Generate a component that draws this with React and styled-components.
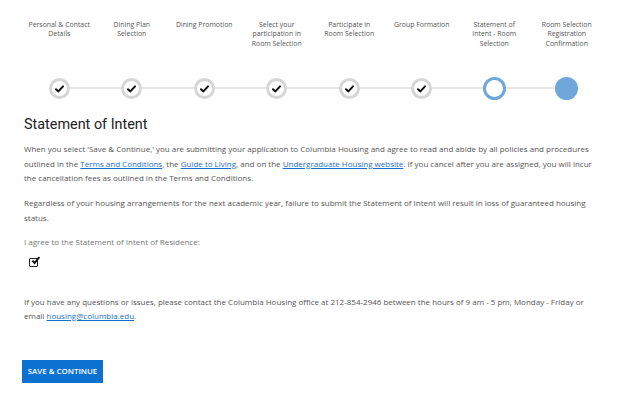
import styled, { createGlobalStyle } from "styled-components";

const GlobalStyle = createGlobalStyle`
  html, body { margin: 0; padding: 0; background: #fff; }
  body { font-family: "Open Sans", "Liberation Sans", sans-serif; }
`;

const steps = [
  { label: "Personal & Contact Details", state: "done" },
  { label: "Dining Plan Selection", state: "done" },
  { label: "Dining Promotion", state: "done" },
  { label: "Select your participation in Room Selection", state: "done" },
  { label: "Participate in Room Selection", state: "done" },
  { label: "Group Formation", state: "done" },
  { label: "Statement of Intent - Room Selection", state: "current" },
  { label: "Room Selection Registration Confirmation", state: "todo" },
];

function Check() {
  return (
    <svg width="9" height="8" viewBox="0 0 9 8">
      <path d="M1 4.2 L3.4 6.4 L8 1.4" fill="none" stroke="#111" strokeWidth="2" strokeLinecap="round" strokeLinejoin="round" />
    </svg>
  );
}

export default function App() {
  return (
    <Page>
      <GlobalStyle />
      <Stepper>
        <Labels>
          {steps.map((s) => (
            <Label key={s.label}>{s.label}</Label>
          ))}
        </Labels>
        <Track>
          <Line />
          {steps.map((s) => (
            <Cell key={s.label}>
              <Dot $state={s.state}>{s.state === "done" && <Check />}</Dot>
            </Cell>
          ))}
        </Track>
      </Stepper>

      <Title>Statement of Intent</Title>
      <Para>
        When you select 'Save &amp; Continue,' you are submitting your application to Columbia Housing and agree to read and abide by all policies and procedures
        outlined in the <Link href="#">Terms and Conditions</Link>, the <Link href="#">Guide to Living</Link>, and on the{" "}
        <Link href="#">Undergraduate Housing website</Link>. If you cancel after you are assigned, you will incur the cancellation fees as outlined in the Terms and Conditions.
      </Para>
      <Para>
        Regardless of your housing arrangements for the next academic year, failure to submit the Statement of Intent will result in loss of guaranteed housing status.
      </Para>
      <Agree>I agree to the Statement of Intent of Residence:</Agree>
      <Box>
        <svg width="9" height="9" viewBox="0 0 9 9">
          <path d="M1.4 4.6 L3.6 7 L8.4 1" fill="none" stroke="#111" strokeWidth="1.9" />
        </svg>
      </Box>
      <Contact>
        If you have any questions or issues, please contact the Columbia Housing office at 212-854-2946 between the hours of 9 am - 5 pm, Monday - Friday or
        email <Link href="#">housing@columbia.edu</Link>.
      </Contact>
      <Button>SAVE &amp; CONTINUE</Button>
    </Page>
  );
}

const Page = styled.div`
  width: 624px;
  height: 399px;
  padding: 0 22px 0 24px;
  box-sizing: border-box;
  color: #555;
  overflow: hidden;
`;

const Stepper = styled.div`
  margin: 0 -1px;
  padding-top: 20px;
`;

const Labels = styled.div`
  display: grid;
  grid-template-columns: repeat(8, 1fr);
  height: 55px;
`;

const Label = styled.div`
  text-align: center;
  font-size: 6.9px;
  line-height: 9.3px;
  color: #555;
  padding: 0 5px;
`;

const Track = styled.div`
  position: relative;
  display: grid;
  grid-template-columns: repeat(8, 1fr);
  height: 26px;
  align-items: center;
`;

const Line = styled.div`
  position: absolute;
  left: 6.25%;
  right: 6.25%;
  top: 50%;
  height: 2px;
  margin-top: -1px;
  background: #e6e6e6;
`;

const Cell = styled.div`
  display: flex;
  justify-content: center;
  position: relative;
`;

const Dot = styled.div`
  box-sizing: border-box;
  width: ${(p) => (p.$state === "done" ? "21px" : "23px")};
  height: ${(p) => (p.$state === "done" ? "21px" : "23px")};
  border-radius: 50%;
  display: flex;
  align-items: center;
  justify-content: center;
  background: ${(p) => (p.$state === "todo" ? "#6fa7db" : "#fff")};
  border: 3px solid ${(p) => (p.$state === "done" ? "#d6d6d6" : "#6fa7db")};
  svg { margin-top: 1px; }
`;

const Title = styled.h1`
  font-family: Roboto, "Liberation Sans", sans-serif;
  font-weight: 400;
  font-size: 14.4px;
  line-height: 18px;
  color: #222;
  margin: 15px 0 8px;
`;

const Para = styled.p`
  font-size: 8px;
  line-height: 14.5px;
  margin: 0 0 10.5px;
  color: #555;
`;

const Link = styled.a`
  color: #1a6fd0;
  text-decoration: underline;
`;

const Agree = styled.div`
  font-size: 8px;
  line-height: 12px;
  color: #777;
  margin-top: 3px;
`;

const Box = styled.div`
  box-sizing: border-box;
  width: 9px;
  height: 9px;
  border: 1.5px solid #222;
  border-radius: 1px;
  margin: 10px 0 0 5px;
  display: flex;
  align-items: center;
  justify-content: center;
  svg { margin: -3px -3px 0 0; flex: none; }
`;

const Contact = styled.p`
  font-size: 8px;
  line-height: 14.2px;
  margin: 28px 0 0;
  color: #555;
`;

const Button = styled.button`
  display: block;
  margin: 37px 0 0 -2px;
  width: 81px;
  height: 23px;
  border: none;
  background: #0b72d2;
  color: #fff;
  font-family: "Open Sans", "Liberation Sans", sans-serif;
  font-size: 7.9px;
  font-weight: 600;
  padding: 0;
`;
